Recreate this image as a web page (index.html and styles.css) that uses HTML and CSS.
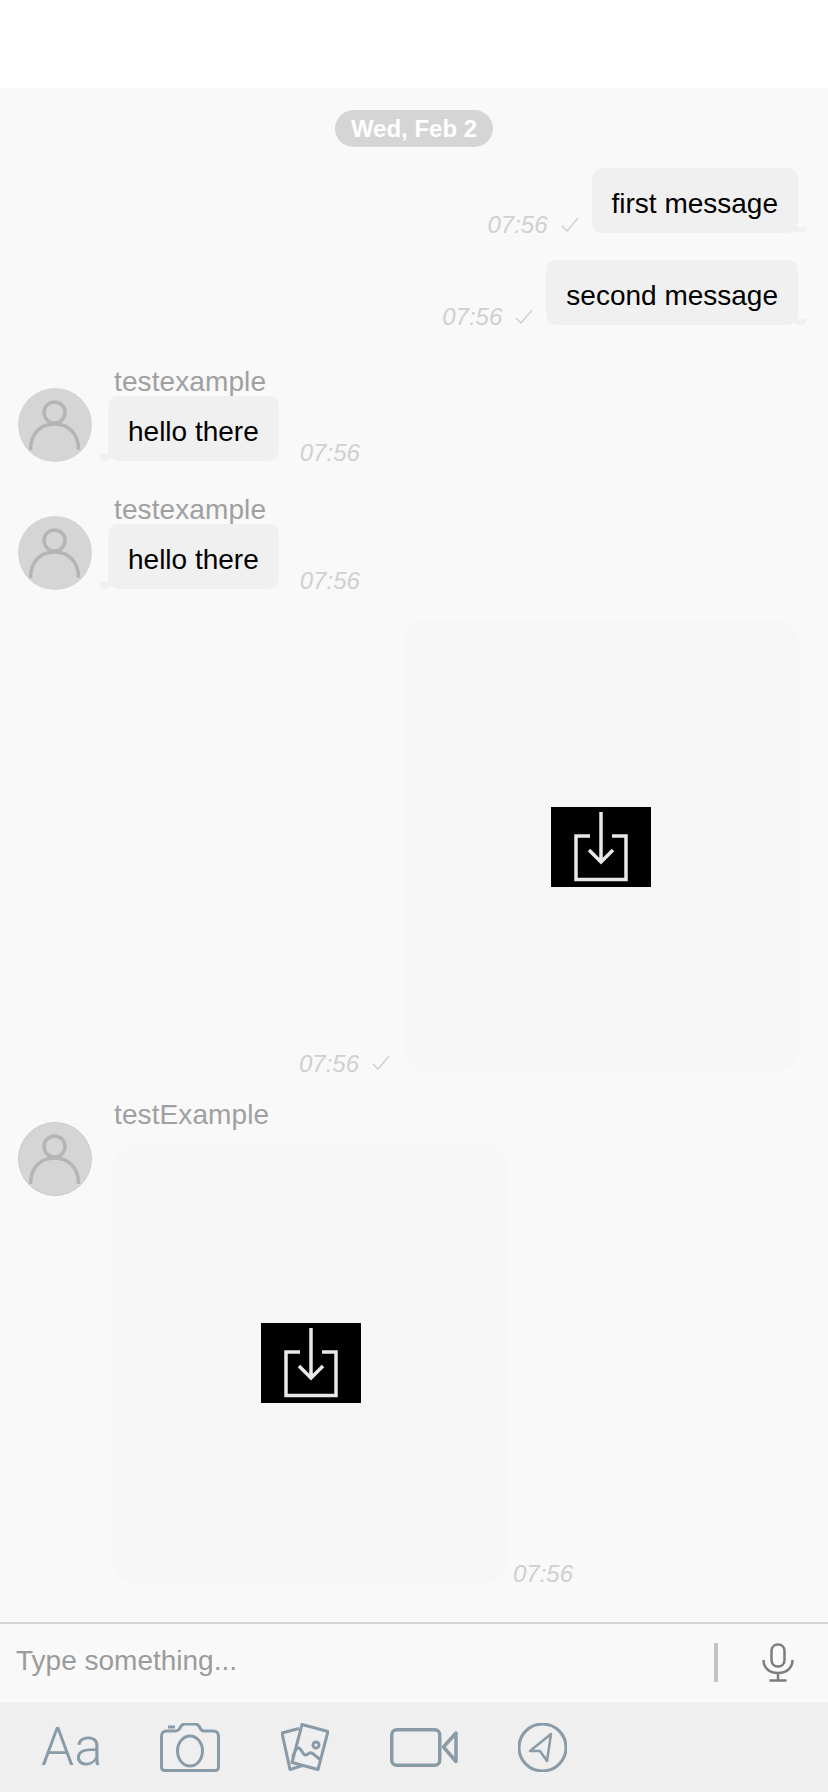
FILE: index.html
```html
<!DOCTYPE html>
<html lang="en">
<head>
<meta charset="utf-8">
<title>Chat</title>
<link rel="stylesheet" href="styles.css">
</head>
<body>
<div class="app">
  <header class="topbar"></header>
  <main class="thread">
    <div class="date"><span class="date-pill">Wed, Feb 2</span></div>

    <div class="out out-first">
      <span class="time">07:56</span>
      <svg class="check" viewBox="0 0 18 15"><path d="M1 9l5 5L17 1"/></svg>
      <div class="bubble bubble-out">first message</div>
    </div>
    <div class="out out-second">
      <span class="time">07:56</span>
      <svg class="check" viewBox="0 0 18 15"><path d="M1 9l5 5L17 1"/></svg>
      <div class="bubble bubble-out">second message</div>
    </div>

    <div class="in in-first">
      <svg class="avatar" viewBox="0 0 74 74"><circle cx="37" cy="37" r="37" fill="#d5d5d5"/><circle cx="36.500" cy="24.500" r="10.500" class="av-line"/><path d="M12.500 62C12.500 46 22 36 36.500 36S60.500 46 60.500 62" class="av-line"/></svg>
      <div class="in-col">
        <div class="name">testexample</div>
        <div class="in-line">
          <div class="bubble bubble-in">hello there</div>
          <span class="time">07:56</span>
        </div>
      </div>
    </div>
    <div class="in in-second">
      <svg class="avatar" viewBox="0 0 74 74"><circle cx="37" cy="37" r="37" fill="#d5d5d5"/><circle cx="36.500" cy="24.500" r="10.500" class="av-line"/><path d="M12.500 62C12.500 46 22 36 36.500 36S60.500 46 60.500 62" class="av-line"/></svg>
      <div class="in-col">
        <div class="name">testexample</div>
        <div class="in-line">
          <div class="bubble bubble-in">hello there</div>
          <span class="time">07:56</span>
        </div>
      </div>
    </div>

    <div class="out out-image">
      <span class="time">07:56</span>
      <svg class="check" viewBox="0 0 18 15"><path d="M1 9l5 5L17 1"/></svg>
      <div class="photo photo-out">
        <svg class="download" viewBox="0 0 100 80"><rect width="100" height="80" fill="#000"/><path d="M39 29H25V72.500H75V29H61M50 5V55M38 43l12 12 12-12"/></svg>
      </div>
    </div>

    <div class="in in-image">
      <svg class="avatar" viewBox="0 0 74 74"><circle cx="37" cy="37" r="36.500" fill="#d5d5d5" stroke="#cbcbcb"/><circle cx="36.500" cy="24.500" r="10.500" class="av-line"/><path d="M12.500 62C12.500 46 22 36 36.500 36S60.500 46 60.500 62" class="av-line"/></svg>
      <div class="in-col">
        <div class="name name-image">testExample</div>
        <div class="in-line">
          <div class="photo photo-in">
            <svg class="download" viewBox="0 0 100 80"><rect width="100" height="80" fill="#000"/><path d="M39 29H25V72.500H75V29H61M50 5V55M38 43l12 12 12-12"/></svg>
          </div>
          <span class="time time-image">07:56</span>
        </div>
      </div>
    </div>
  </main>

  <div class="composer">
    <span class="placeholder">Type something...</span>
    <span class="divider"></span>
    <svg class="mic" viewBox="0 0 32 39"><path d="M16 1.500c-4 0-6.500 2.700-6.500 6.500v9c0 3.800 2.500 6.500 6.500 6.500s6.500-2.700 6.500-6.500V8c0-3.800-2.500-6.500-6.500-6.500zM1.500 17c0 8 6 13 14.500 13s14.500-5 14.500-13M16 30v7.500M7.500 37.500h17"/></svg>
  </div>

  <nav class="toolbar">
    <span class="aa">Aa</span>
    <svg class="tool tool-camera" viewBox="0 0 60 49"><path d="M5 47.500h50c2.500 0 3.500-1.500 3.500-3.500V13c0-3-2-5-5-5H44c-2 0-3-1-4-3l-1-2c-1-1-2-2-4-2H25c-2 0-3 1-4 2l-1.500 3c-1 1-2 2-4 2H6.500c-3 0-5 2-5 5v31c0 2 1 3.500 3.500 3.500zM8 4h7"/><ellipse cx="30" cy="28" rx="12.500" ry="15"/></svg>
    <svg class="tool tool-gallery" viewBox="0 0 48 48"><path d="M21 1.500 47 8.500 37 46.500 11 39.500zM18 5.500 1 10 9 46.500 21.500 42.500M11.500 34c2-4 3-9 6-9 3 0 4 7 7 7 2 0 4-3 6-2 3 1 6 5 9 7"/><circle cx="35" cy="22" r="3"/></svg>
    <svg class="tool tool-video" viewBox="0 0 68 39"><rect x="1.750" y="1.750" width="48" height="35.500" rx="5"/><path d="M53.500 19 66 5v28.500z"/></svg>
    <svg class="tool tool-send" viewBox="0 0 49 49"><circle cx="24.500" cy="24.500" r="23.500"/><path class="send-arrow" d="M33 11 12 28l10 0 7 10z"/></svg>
  </nav>
</div>
</body>
</html>
```
FILE: styles.css
```css
* { box-sizing: border-box; }
html, body { margin: 0; padding: 0; }
body { font-family: "Liberation Sans", Arial, sans-serif; background: #f9f9f9; }

.app { width: 828px; height: 1792px; display: flex; flex-direction: column; overflow: hidden; }
.topbar { height: 88px; flex: none; background: #fff; }
.thread { flex: 1; min-height: 0; background: #f9f9f9; }

.date { display: flex; justify-content: center; padding-top: 22px; }
.date-pill { height: 37px; padding: 0 16px; border-radius: 19px; background: #d5d5d5; color: #fff; font-size: 24px; font-weight: 700; line-height: 37px; }

.time { font-size: 24px; font-style: italic; line-height: 24px; color: #d0d0d0; margin-bottom: -4px; }
.check { width: 18px; height: 15px; margin-left: 13px; margin-right: 13px; margin-bottom: 1px; flex: none; }
.check path { fill: none; stroke: #d0d0d0; stroke-width: 1.500; }

.bubble { position: relative; height: 65px; padding: 0 20px; background: #f0f0f0; border-radius: 10px; font-size: 28px; line-height: 72px; color: #000; white-space: nowrap; }
.bubble-out::after { content: ""; position: absolute; right: -9px; bottom: 0; width: 14px; height: 6px; background: #f0f0f0; border-radius: 0 0 8px 8px; }
.bubble-in::after { content: ""; position: absolute; left: -9px; bottom: 0; width: 14px; height: 7px; background: #f0f0f0; border-radius: 0 0 8px 8px; }

.out { display: flex; justify-content: flex-end; align-items: flex-end; padding-right: 30px; }
.out-first { margin-top: 21px; }
.out-second { margin-top: 27px; }
.out-image { margin-top: 30px; padding-right: 29px; }
.out-image .time { margin-bottom: -3px; }
.out-image .check { margin-bottom: 3px; }

.in { display: flex; align-items: flex-start; padding-left: 18px; }
.in-first { margin-top: 43px; }
.in-second { margin-top: 34px; }
.in-image { margin-top: 29px; }
.avatar { width: 74px; height: 74px; flex: none; margin-top: 20px; }
.av-line { fill: none; stroke: #b5b5b5; stroke-width: 3.500; }
.in-col { margin-left: 16px; }
.name { height: 28px; padding-left: 6px; font-size: 28px; line-height: 28px; letter-spacing: 0.1px; color: #a0a0a0; white-space: nowrap; }
.name-image { height: 41px; line-height: 25px; }
.in-line { display: flex; align-items: flex-end; }
.in-line .time { margin-left: 21px; }
.in-line .time-image { margin-left: 5px; margin-bottom: -3px; }

.photo { display: flex; align-items: center; justify-content: center; background: #f7f7f7; border-radius: 24px; }
.photo-out { width: 396px; height: 453px; padding-top: 1px; }
.photo-in { width: 395px; height: 440px; margin-left: 5px; }
.download { width: 100px; height: 80px; flex: none; display: block; }
.download path { fill: none; stroke: #e8e8e8; stroke-width: 3.500; filter: blur(0.4px); }

.composer { height: 80px; flex: none; display: flex; align-items: center; border-top: 2px solid #d5d5d5; background: #f9f9f9; padding: 0 34px 2px 16px; }
.placeholder { flex: 1; font-size: 28px; color: #9b9b9b; margin-bottom: 3px; }
.divider { width: 4px; height: 39px; background: #c4c4c4; margin-right: 44px; }
.mic { width: 32px; height: 39px; flex: none; }
.mic path { fill: none; stroke: #7f7b7b; stroke-width: 2.500; }

.toolbar { height: 90px; flex: none; display: flex; align-items: center; gap: 61px; padding-left: 41px; background: #efefef; }
.aa { width: 58px; font-family: Roboto, sans-serif; font-size: 53px; font-weight: 300; line-height: 62px; color: #8a9ba8; white-space: nowrap; }
.tool { flex: none; display: block; }
.tool path, .tool rect, .tool circle, .tool ellipse { fill: none; stroke: #8a9ba8; stroke-width: 3; stroke-linejoin: round; }
.tool-camera { width: 60px; height: 49px; }
.tool-gallery { width: 48px; height: 48px; }
.tool-video { width: 68px; height: 39px; }
.tool-video rect, .tool-video path { stroke-width: 3.500; }
.tool-send { width: 49px; height: 49px; margin-left: -1px; }
.tool .send-arrow { stroke-width: 2.500; }
```
